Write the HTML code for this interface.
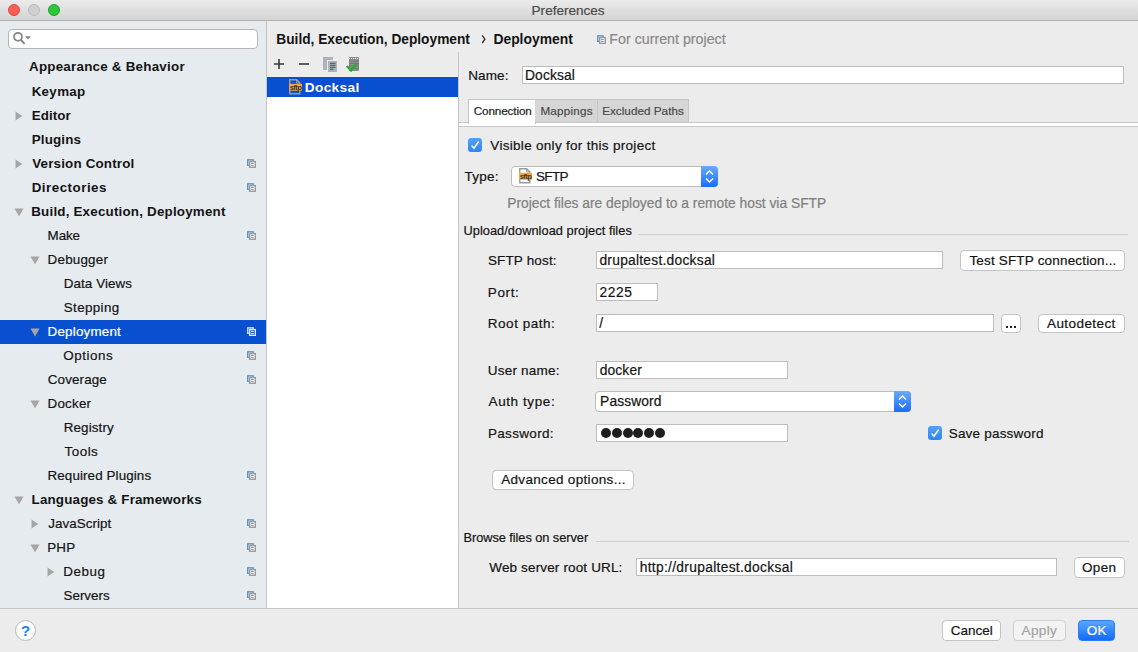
<!DOCTYPE html>
<html><head><meta charset="utf-8"><style>
html,body{margin:0;padding:0}
body{width:1138px;height:652px;overflow:hidden;position:relative;background:#ececec;font-family:"Liberation Sans",sans-serif}
.a{position:absolute;box-sizing:content-box}
.t{position:absolute;white-space:nowrap;line-height:1;-webkit-text-stroke:0.2px currentColor}
.t.b{-webkit-text-stroke:0}
.bl{display:inline-block;width:0;height:0;vertical-align:baseline}
.fld{background:#fff;border:1px solid #bdbdbd}
.btn{box-sizing:border-box;background:#fff;border:1px solid #c3c3c3;border-radius:4px}
</style></head><body>
<div class="a" style="left:0;top:0;width:1138px;height:20px;background:linear-gradient(#ebebeb,#d4d4d4)"></div>
<div class="a" style="left:0;top:20px;width:1138px;height:1px;background:#b3b3b3"></div>
<div class="a" style="left:8px;top:4px;width:10px;height:10px;border-radius:50%;background:#fd5f57;border:1px solid #e0443e"></div>
<div class="a" style="left:28px;top:4px;width:10px;height:10px;border-radius:50%;background:#cfcfcf;border:1px solid #bababa"></div>
<div class="a" style="left:48px;top:4px;width:10px;height:10px;border-radius:50%;background:#2bc73f;border:1px solid #16a526"></div>
<div class="a" style="left:0;top:21px;width:266px;height:587px;background:#e6ebf0"></div>
<div class="a" style="left:266px;top:21px;width:1px;height:587px;background:#c4c4c4"></div>
<div class="a" style="left:8px;top:29px;width:248px;height:18px;background:#fff;border:1px solid #b5b5b5;border-radius:4px"></div>
<svg class="a" style="left:12px;top:31px" width="20" height="16" viewBox="0 0 20 16">
<circle cx="6" cy="5.8" r="4" fill="none" stroke="#858585" stroke-width="1.7"/>
<path d="M8.8 8.8L12.6 12.9" stroke="#858585" stroke-width="2"/>
<path d="M13 5.2H18.8L15.9 8.6Z" fill="#858585"/>
</svg>
<div class="a" style="left:0;top:320px;width:266px;height:24px;background:#0950d0"></div>
<svg class="a" style="left:15px;top:159px" width="8" height="10" viewBox="0 0 8 10"><path d="M0.5 0.5L7.5 5L0.5 9.5Z" fill="#a6a6a6"/></svg>
<svg class="a" style="left:15px;top:111px" width="8" height="10" viewBox="0 0 8 10"><path d="M0.5 0.5L7.5 5L0.5 9.5Z" fill="#a6a6a6"/></svg>
<svg class="a" style="left:31px;top:519px" width="8" height="10" viewBox="0 0 8 10"><path d="M0.5 0.5L7.5 5L0.5 9.5Z" fill="#a6a6a6"/></svg>
<svg class="a" style="left:47px;top:567px" width="8" height="10" viewBox="0 0 8 10"><path d="M0.5 0.5L7.5 5L0.5 9.5Z" fill="#a6a6a6"/></svg>
<svg class="a" style="left:14px;top:208px" width="10" height="9" viewBox="0 0 10 9"><path d="M0.5 0.5L9.5 0.5L5 8.5Z" fill="#a6a6a6"/></svg>
<svg class="a" style="left:30px;top:256px" width="10" height="9" viewBox="0 0 10 9"><path d="M0.5 0.5L9.5 0.5L5 8.5Z" fill="#a6a6a6"/></svg>
<svg class="a" style="left:30px;top:328px" width="10" height="9" viewBox="0 0 10 9"><path d="M0.5 0.5L9.5 0.5L5 8.5Z" fill="#a6a6a6"/></svg>
<svg class="a" style="left:30px;top:400px" width="10" height="9" viewBox="0 0 10 9"><path d="M0.5 0.5L9.5 0.5L5 8.5Z" fill="#a6a6a6"/></svg>
<svg class="a" style="left:14px;top:496px" width="10" height="9" viewBox="0 0 10 9"><path d="M0.5 0.5L9.5 0.5L5 8.5Z" fill="#a6a6a6"/></svg>
<svg class="a" style="left:30px;top:544px" width="10" height="9" viewBox="0 0 10 9"><path d="M0.5 0.5L9.5 0.5L5 8.5Z" fill="#a6a6a6"/></svg>
<svg class="a" style="left:246px;top:158px" width="11" height="11" viewBox="0 0 11 11">
<rect x="1.75" y="1.85" width="5.4" height="5.5" fill="none" stroke="#4d8fc2" stroke-width="1.3"/>
<rect x="3.65" y="3.55" width="5.7" height="5.8" fill="#e6ebf0" stroke="#9b9b9b" stroke-width="1.3"/>
<path d="M5 5.5H7.8M5 7.5H7.8" stroke="#9b9b9b" stroke-width="1"/>
</svg>
<svg class="a" style="left:246px;top:182px" width="11" height="11" viewBox="0 0 11 11">
<rect x="1.75" y="1.85" width="5.4" height="5.5" fill="none" stroke="#4d8fc2" stroke-width="1.3"/>
<rect x="3.65" y="3.55" width="5.7" height="5.8" fill="#e6ebf0" stroke="#9b9b9b" stroke-width="1.3"/>
<path d="M5 5.5H7.8M5 7.5H7.8" stroke="#9b9b9b" stroke-width="1"/>
</svg>
<svg class="a" style="left:246px;top:230px" width="11" height="11" viewBox="0 0 11 11">
<rect x="1.75" y="1.85" width="5.4" height="5.5" fill="none" stroke="#4d8fc2" stroke-width="1.3"/>
<rect x="3.65" y="3.55" width="5.7" height="5.8" fill="#e6ebf0" stroke="#9b9b9b" stroke-width="1.3"/>
<path d="M5 5.5H7.8M5 7.5H7.8" stroke="#9b9b9b" stroke-width="1"/>
</svg>
<svg class="a" style="left:246px;top:350px" width="11" height="11" viewBox="0 0 11 11">
<rect x="1.75" y="1.85" width="5.4" height="5.5" fill="none" stroke="#4d8fc2" stroke-width="1.3"/>
<rect x="3.65" y="3.55" width="5.7" height="5.8" fill="#e6ebf0" stroke="#9b9b9b" stroke-width="1.3"/>
<path d="M5 5.5H7.8M5 7.5H7.8" stroke="#9b9b9b" stroke-width="1"/>
</svg>
<svg class="a" style="left:246px;top:374px" width="11" height="11" viewBox="0 0 11 11">
<rect x="1.75" y="1.85" width="5.4" height="5.5" fill="none" stroke="#4d8fc2" stroke-width="1.3"/>
<rect x="3.65" y="3.55" width="5.7" height="5.8" fill="#e6ebf0" stroke="#9b9b9b" stroke-width="1.3"/>
<path d="M5 5.5H7.8M5 7.5H7.8" stroke="#9b9b9b" stroke-width="1"/>
</svg>
<svg class="a" style="left:246px;top:470px" width="11" height="11" viewBox="0 0 11 11">
<rect x="1.75" y="1.85" width="5.4" height="5.5" fill="none" stroke="#4d8fc2" stroke-width="1.3"/>
<rect x="3.65" y="3.55" width="5.7" height="5.8" fill="#e6ebf0" stroke="#9b9b9b" stroke-width="1.3"/>
<path d="M5 5.5H7.8M5 7.5H7.8" stroke="#9b9b9b" stroke-width="1"/>
</svg>
<svg class="a" style="left:246px;top:518px" width="11" height="11" viewBox="0 0 11 11">
<rect x="1.75" y="1.85" width="5.4" height="5.5" fill="none" stroke="#4d8fc2" stroke-width="1.3"/>
<rect x="3.65" y="3.55" width="5.7" height="5.8" fill="#e6ebf0" stroke="#9b9b9b" stroke-width="1.3"/>
<path d="M5 5.5H7.8M5 7.5H7.8" stroke="#9b9b9b" stroke-width="1"/>
</svg>
<svg class="a" style="left:246px;top:542px" width="11" height="11" viewBox="0 0 11 11">
<rect x="1.75" y="1.85" width="5.4" height="5.5" fill="none" stroke="#4d8fc2" stroke-width="1.3"/>
<rect x="3.65" y="3.55" width="5.7" height="5.8" fill="#e6ebf0" stroke="#9b9b9b" stroke-width="1.3"/>
<path d="M5 5.5H7.8M5 7.5H7.8" stroke="#9b9b9b" stroke-width="1"/>
</svg>
<svg class="a" style="left:246px;top:566px" width="11" height="11" viewBox="0 0 11 11">
<rect x="1.75" y="1.85" width="5.4" height="5.5" fill="none" stroke="#4d8fc2" stroke-width="1.3"/>
<rect x="3.65" y="3.55" width="5.7" height="5.8" fill="#e6ebf0" stroke="#9b9b9b" stroke-width="1.3"/>
<path d="M5 5.5H7.8M5 7.5H7.8" stroke="#9b9b9b" stroke-width="1"/>
</svg>
<svg class="a" style="left:246px;top:590px" width="11" height="11" viewBox="0 0 11 11">
<rect x="1.75" y="1.85" width="5.4" height="5.5" fill="none" stroke="#4d8fc2" stroke-width="1.3"/>
<rect x="3.65" y="3.55" width="5.7" height="5.8" fill="#e6ebf0" stroke="#9b9b9b" stroke-width="1.3"/>
<path d="M5 5.5H7.8M5 7.5H7.8" stroke="#9b9b9b" stroke-width="1"/>
</svg>
<svg class="a" style="left:246px;top:326px" width="11" height="11" viewBox="0 0 11 11">
<rect x="1.75" y="1.85" width="5.4" height="5.5" fill="none" stroke="#d6eeff" stroke-width="1.3"/>
<rect x="3.65" y="3.55" width="5.7" height="5.8" fill="#0950d0" stroke="#f2e8d6" stroke-width="1.3"/>
<path d="M5 5.5H7.8M5 7.5H7.8" stroke="#f2e8d6" stroke-width="1"/>
</svg>
<div class="a" style="left:267px;top:77px;width:191px;height:531px;background:#fff"></div>
<div class="a" style="left:267px;top:77px;width:191px;height:20px;background:#0950d0"></div>
<div class="a" style="left:458px;top:52px;width:1px;height:556px;background:#c5c5c5"></div>
<svg class="a" style="left:289px;top:79px" width="14" height="16" viewBox="0 0 14 16">
<path d="M0.75 0.75H7.6L10.75 3.9V14.85H0.75Z" fill="none" stroke="#9a9a9a" stroke-width="1.5"/>
<path d="M7.5 1V4H10.5" fill="none" stroke="#9a9a9a" stroke-width="1"/>
<rect x="0" y="4.8" width="13" height="6.9" fill="#f4a640"/>
<text x="6.5" y="10.6" font-family="Liberation Sans" font-size="7.6" font-weight="bold" text-anchor="middle" fill="#3a3a3a" letter-spacing="-0.6" transform="scale(1,1)">sftp</text>
</svg>
<svg class="a" style="left:272px;top:56px" width="92" height="18" viewBox="0 0 92 18">
<path d="M2 8H12M7 3V13" stroke="#383838" stroke-width="1.6"/>
<path d="M27 8H37" stroke="#383838" stroke-width="1.6"/>
<rect x="51" y="1" width="10" height="13" fill="#abb4bb"/>
<rect x="55.5" y="4.5" width="10" height="12" fill="#abb4bb" stroke="#ececec" stroke-width="1"/>
<path d="M58 7.3H63.5M58 9.3H63.5M58 11.3H63.5M58 13.3H61.5" stroke="#4a5157" stroke-width="1"/>
<rect x="77" y="1" width="10" height="14" fill="#8e8e8e"/>
<path d="M77 2.5H87" stroke="#f0f0f0" stroke-width="1" stroke-dasharray="1 1"/>
<path d="M77 5H87M77 7.5H87M77 10H87M77 12.5H87" stroke="#6e6e6e" stroke-width="0.8"/>
<path d="M74.8 10L79.2 14.6L85 7.2" fill="none" stroke="#20b12c" stroke-width="2.3"/>
</svg>
<svg class="a" style="left:478px;top:32px" width="10" height="14" viewBox="478 32 10 14"><path d="M482.2 35.4L484.9 39.2L482.2 43" fill="none" stroke="#2a2a2a" stroke-width="1.3"/></svg>
<svg class="a" style="left:596px;top:34px" width="11" height="11" viewBox="0 0 11 11">
<rect x="1.75" y="1.85" width="5.4" height="5.5" fill="none" stroke="#4d8fc2" stroke-width="1.3"/>
<rect x="3.65" y="3.55" width="5.7" height="5.8" fill="#ececec" stroke="#9b9b9b" stroke-width="1.3"/>
<path d="M5 5.5H7.8M5 7.5H7.8" stroke="#9b9b9b" stroke-width="1"/>
</svg>
<div class="a fld" style="left:522px;top:66px;width:600px;height:16px"></div>
<div class="a" style="left:459px;top:122px;width:679px;height:1px;background:#c8c8c8"></div>
<div class="a" style="left:459px;top:123px;width:679px;height:3px;background:#fff"></div>
<div class="a" style="left:459px;top:126px;width:679px;height:1px;background:#c8c8c8"></div>
<div class="a" style="left:468px;top:99px;width:66px;height:23px;background:#fff;border:1px solid #c6c6c6;border-bottom:none;height:24px"></div>
<div class="a" style="left:535px;top:99px;width:62px;height:22px;background:#d6d6d6;border-top:1px solid #c6c6c6"></div>
<div class="a" style="left:597px;top:99px;width:1px;height:23px;background:#c6c6c6"></div>
<div class="a" style="left:598px;top:99px;width:90px;height:22px;background:#d6d6d6;border-top:1px solid #c6c6c6;border-right:1px solid #c6c6c6"></div>
<div class="a" style="left:468px;top:138px;width:14px;height:14px;border-radius:3px;background:linear-gradient(#55a2f9,#2a85f6)"></div>
<svg class="a" style="left:468px;top:138px" width="14" height="14" viewBox="0 0 14 14"><path d="M3.6 7.4L6 10.2L10.6 3.6" fill="none" stroke="#fff" stroke-width="1.5"/></svg>
<div class="a" style="left:928px;top:426px;width:14px;height:14px;border-radius:3px;background:linear-gradient(#55a2f9,#2a85f6)"></div>
<svg class="a" style="left:928px;top:426px" width="14" height="14" viewBox="0 0 14 14"><path d="M3.6 7.4L6 10.2L10.6 3.6" fill="none" stroke="#fff" stroke-width="1.5"/></svg>
<div class="a" style="left:511px;top:166px;width:207px;height:19px;background:#fff;border:1px solid #bcbcbc;border-radius:4px;box-sizing:border-box;height:21px"></div>
<div class="a" style="left:701px;top:166px;width:17px;height:21px;border-radius:0 4px 4px 0;background:linear-gradient(#67acfb,#1a6dfd)"></div>
<svg class="a" style="left:701px;top:166px" width="17" height="21" viewBox="0 0 17 21"><path d="M5 8.5L8.5 5L12 8.5M5 12.5L8.5 16L12 12.5" fill="none" stroke="#fff" stroke-width="1.4"/></svg>
<svg class="a" style="left:519px;top:168px" width="14" height="16" viewBox="0 0 14 16">
<path d="M0.75 0.75H7.6L10.75 3.9V14.85H0.75Z" fill="none" stroke="#9a9a9a" stroke-width="1.5"/>
<path d="M7.5 1V4H10.5" fill="none" stroke="#9a9a9a" stroke-width="1"/>
<rect x="0" y="4.8" width="13" height="6.9" fill="#f4a640"/>
<text x="6.5" y="10.6" font-family="Liberation Sans" font-size="7.6" font-weight="bold" text-anchor="middle" fill="#3a3a3a" letter-spacing="-0.6" transform="scale(1,1)">sftp</text>
</svg>
<div class="a" style="left:638px;top:234px;width:490px;height:1px;background:#d0d0d0"></div>
<div class="a fld" style="left:596px;top:251px;width:345px;height:16px"></div>
<div class="a fld" style="left:596px;top:283px;width:60px;height:16px"></div>
<div class="a fld" style="left:596px;top:314px;width:396px;height:16px"></div>
<div class="a fld" style="left:596px;top:361px;width:190px;height:16px"></div>
<div class="a" style="left:595px;top:391px;width:316px;height:19px;background:#fff;border:1px solid #bcbcbc;border-radius:4px;box-sizing:border-box;height:21px"></div>
<div class="a" style="left:894px;top:391px;width:17px;height:21px;border-radius:0 4px 4px 0;background:linear-gradient(#67acfb,#1a6dfd)"></div>
<svg class="a" style="left:894px;top:391px" width="17" height="21" viewBox="0 0 17 21"><path d="M5 8.5L8.5 5L12 8.5M5 12.5L8.5 16L12 12.5" fill="none" stroke="#fff" stroke-width="1.4"/></svg>
<div class="a fld" style="left:596px;top:424px;width:190px;height:16px"></div>
<div class="a" style="left:601.0px;top:428px;width:10px;height:10px;border-radius:50%;background:#1e1e1e"></div>
<div class="a" style="left:611.8px;top:428px;width:10px;height:10px;border-radius:50%;background:#1e1e1e"></div>
<div class="a" style="left:622.6px;top:428px;width:10px;height:10px;border-radius:50%;background:#1e1e1e"></div>
<div class="a" style="left:633.4px;top:428px;width:10px;height:10px;border-radius:50%;background:#1e1e1e"></div>
<div class="a" style="left:644.2px;top:428px;width:10px;height:10px;border-radius:50%;background:#1e1e1e"></div>
<div class="a" style="left:655.0px;top:428px;width:10px;height:10px;border-radius:50%;background:#1e1e1e"></div>
<div class="a btn" style="left:960px;top:250px;width:165px;height:21px;"></div>
<div class="a btn" style="left:1001px;top:314px;width:20px;height:19px;"></div>
<div class="a btn" style="left:1038px;top:314px;width:87px;height:19px;"></div>
<div class="a btn" style="left:492px;top:470px;width:142px;height:20px;"></div>
<div class="a btn" style="left:1074px;top:557px;width:51px;height:21px;"></div>
<div class="a btn" style="left:942px;top:620px;width:59px;height:21px;"></div>
<div class="a btn" style="left:1013px;top:620px;width:53px;height:21px;background:#f3f3f3;border-color:#cfcfcf"></div>
<div class="a btn" style="left:1078px;top:620px;width:37px;height:21px;background:linear-gradient(#5aa6fb,#116bfd);border-color:#2a7ef5"></div>
<div class="a" style="left:1006px;top:326px;width:2px;height:2px;background:#222"></div><div class="a" style="left:1010px;top:326px;width:2px;height:2px;background:#222"></div><div class="a" style="left:1014px;top:326px;width:2px;height:2px;background:#222"></div>
<div class="a" style="left:596px;top:541px;width:533px;height:1px;background:#d0d0d0"></div>
<div class="a fld" style="left:636px;top:558px;width:419px;height:16px"></div>
<div class="a" style="left:0;top:608px;width:1138px;height:1px;background:#c4c4c4"></div>
<div class="a" style="left:15px;top:620px;width:19px;height:19px;border-radius:50%;background:#fff;border:1px solid #b8b8b8"></div>
<div class="a" style="left:15px;top:619.5px;width:21px;height:21px;text-align:center;font-size:15px;font-weight:bold;line-height:21px;color:#1a7ef8">?</div>
<div class="t" id="t0" style="left:531.59px;top:3.65px;font-size:13.55px;font-weight:normal;color:#4a4a4a;">Preferences<i class="bl"></i></div>
<div class="t b" id="t1" style="left:28.99px;top:60.01px;font-size:13.40px;font-weight:bold;color:#141414;letter-spacing:0.228px;">Appearance &amp; Behavior<i class="bl"></i></div>
<div class="t b" id="t2" style="left:31.64px;top:85.01px;font-size:13.40px;font-weight:bold;color:#141414;letter-spacing:0.314px;">Keymap<i class="bl"></i></div>
<div class="t b" id="t3" style="left:31.73px;top:109.01px;font-size:13.40px;font-weight:bold;color:#141414;letter-spacing:0.041px;">Editor<i class="bl"></i></div>
<div class="t b" id="t4" style="left:31.69px;top:133.00px;font-size:13.40px;font-weight:bold;color:#141414;letter-spacing:0.155px;">Plugins<i class="bl"></i></div>
<div class="t b" id="t5" style="left:32.25px;top:157.00px;font-size:13.40px;font-weight:bold;color:#141414;letter-spacing:0.163px;">Version Control<i class="bl"></i></div>
<div class="t b" id="t6" style="left:31.70px;top:181.00px;font-size:13.40px;font-weight:bold;color:#141414;letter-spacing:0.485px;">Directories<i class="bl"></i></div>
<div class="t b" id="t7" style="left:31.25px;top:205.00px;font-size:13.40px;font-weight:bold;color:#141414;letter-spacing:0.191px;">Build, Execution, Deployment<i class="bl"></i></div>
<div class="t" id="t8" style="left:47.59px;top:229.01px;font-size:13.40px;font-weight:normal;color:#141414;letter-spacing:-0.084px;">Make<i class="bl"></i></div>
<div class="t" id="t9" style="left:47.60px;top:253.01px;font-size:13.40px;font-weight:normal;color:#141414;letter-spacing:0.210px;">Debugger<i class="bl"></i></div>
<div class="t" id="t10" style="left:63.70px;top:277.01px;font-size:13.40px;font-weight:normal;color:#141414;letter-spacing:0.089px;">Data Views<i class="bl"></i></div>
<div class="t" id="t11" style="left:63.76px;top:301.01px;font-size:13.40px;font-weight:normal;color:#141414;letter-spacing:0.363px;">Stepping<i class="bl"></i></div>
<div class="t" id="t12" style="left:47.53px;top:325.01px;font-size:13.40px;font-weight:normal;color:#ffffff;letter-spacing:0.206px;">Deployment<i class="bl"></i></div>
<div class="t" id="t13" style="left:63.35px;top:349.01px;font-size:13.40px;font-weight:normal;color:#141414;letter-spacing:0.538px;">Options<i class="bl"></i></div>
<div class="t" id="t14" style="left:47.77px;top:373.01px;font-size:13.40px;font-weight:normal;color:#141414;letter-spacing:0.129px;">Coverage<i class="bl"></i></div>
<div class="t" id="t15" style="left:47.55px;top:397.01px;font-size:13.40px;font-weight:normal;color:#141414;letter-spacing:0.206px;">Docker<i class="bl"></i></div>
<div class="t" id="t16" style="left:63.73px;top:421.01px;font-size:13.40px;font-weight:normal;color:#141414;letter-spacing:0.125px;">Registry<i class="bl"></i></div>
<div class="t" id="t17" style="left:64.55px;top:445.01px;font-size:13.40px;font-weight:normal;color:#141414;letter-spacing:0.497px;">Tools<i class="bl"></i></div>
<div class="t" id="t18" style="left:47.56px;top:469.01px;font-size:13.40px;font-weight:normal;color:#141414;letter-spacing:0.105px;">Required Plugins<i class="bl"></i></div>
<div class="t b" id="t19" style="left:31.59px;top:493.00px;font-size:13.40px;font-weight:bold;color:#141414;letter-spacing:0.160px;">Languages &amp; Frameworks<i class="bl"></i></div>
<div class="t" id="t20" style="left:48.19px;top:517.01px;font-size:13.40px;font-weight:normal;color:#141414;letter-spacing:0.071px;">JavaScript<i class="bl"></i></div>
<div class="t" id="t21" style="left:47.17px;top:541.01px;font-size:13.40px;font-weight:normal;color:#141414;letter-spacing:0.228px;">PHP<i class="bl"></i></div>
<div class="t" id="t22" style="left:63.23px;top:565.01px;font-size:13.40px;font-weight:normal;color:#141414;letter-spacing:0.538px;">Debug<i class="bl"></i></div>
<div class="t" id="t23" style="left:63.55px;top:589.01px;font-size:13.40px;font-weight:normal;color:#141414;letter-spacing:-0.010px;">Servers<i class="bl"></i></div>
<div class="t b" id="t24" style="left:276.31px;top:32.99px;font-size:13.72px;font-weight:bold;color:#141414;">Build, Execution, Deployment<i class="bl"></i></div>
<div class="t b" id="t26" style="left:493.38px;top:32.99px;font-size:13.90px;font-weight:bold;color:#141414;">Deployment<i class="bl"></i></div>
<div class="t" id="t27" style="left:609.37px;top:32.01px;font-size:14.24px;font-weight:normal;color:#8a8a8a;">For current project<i class="bl"></i></div>
<div class="t b" id="t28" style="left:304.73px;top:81.01px;font-size:13.70px;font-weight:bold;color:#ffffff;letter-spacing:0.343px;">Docksal<i class="bl"></i></div>
<div class="t" id="t29" style="left:468.22px;top:69.00px;font-size:13.50px;font-weight:normal;color:#141414;letter-spacing:0.123px;">Name:<i class="bl"></i></div>
<div class="t" id="t30" style="left:525.02px;top:68.61px;font-size:13.80px;font-weight:normal;color:#141414;letter-spacing:0.114px;">Docksal<i class="bl"></i></div>
<div class="t" id="t31" style="left:473.70px;top:105.01px;font-size:11.70px;font-weight:normal;color:#1a1a1a;letter-spacing:-0.109px;">Connection<i class="bl"></i></div>
<div class="t" id="t32" style="left:540.38px;top:105.01px;font-size:11.70px;font-weight:normal;color:#4a4a4a;letter-spacing:0.206px;">Mappings<i class="bl"></i></div>
<div class="t" id="t33" style="left:602.15px;top:105.01px;font-size:11.70px;font-weight:normal;color:#4a4a4a;letter-spacing:0.033px;">Excluded Paths<i class="bl"></i></div>
<div class="t" id="t34" style="left:490.37px;top:139.00px;font-size:13.50px;font-weight:normal;color:#141414;letter-spacing:0.297px;">Visible only for this project<i class="bl"></i></div>
<div class="t" id="t35" style="left:464.48px;top:169.60px;font-size:13.50px;font-weight:normal;color:#141414;letter-spacing:0.224px;">Type:<i class="bl"></i></div>
<div class="t" id="t36" style="left:535.88px;top:170.00px;font-size:13.50px;font-weight:normal;color:#141414;letter-spacing:-0.600px;">SFTP<i class="bl"></i></div>
<div class="t" id="t37" style="left:507.19px;top:196.90px;font-size:13.81px;font-weight:normal;color:#808080;">Project files are deployed to a remote host via SFTP<i class="bl"></i></div>
<div class="t" id="t38" style="left:463.45px;top:225.00px;font-size:12.80px;font-weight:normal;color:#141414;letter-spacing:0.043px;">Upload/download project files<i class="bl"></i></div>
<div class="t" id="t39" style="left:487.88px;top:254.21px;font-size:13.50px;font-weight:normal;color:#141414;letter-spacing:0.161px;">SFTP host:<i class="bl"></i></div>
<div class="t" id="t40" style="left:599.46px;top:254.01px;font-size:13.80px;font-weight:normal;color:#141414;letter-spacing:0.248px;">drupaltest.docksal<i class="bl"></i></div>
<div class="t" id="t41" style="left:969.39px;top:254.41px;font-size:13.50px;font-weight:normal;color:#141414;letter-spacing:0.177px;">Test SFTP connection...<i class="bl"></i></div>
<div class="t" id="t42" style="left:487.84px;top:285.81px;font-size:13.50px;font-weight:normal;color:#141414;letter-spacing:0.600px;">Port:<i class="bl"></i></div>
<div class="t" id="t43" style="left:599.47px;top:286.01px;font-size:13.80px;font-weight:normal;color:#141414;letter-spacing:0.600px;">2225<i class="bl"></i></div>
<div class="t" id="t44" style="left:487.86px;top:316.60px;font-size:13.50px;font-weight:normal;color:#141414;letter-spacing:0.503px;">Root path:<i class="bl"></i></div>
<div class="t" id="t45" style="left:599.37px;top:317.01px;font-size:13.80px;font-weight:normal;color:#141414;">/<i class="bl"></i></div>
<div class="t" id="t46" style="left:1047.02px;top:317.00px;font-size:13.50px;font-weight:normal;color:#141414;letter-spacing:0.422px;">Autodetect<i class="bl"></i></div>
<div class="t" id="t47" style="left:487.80px;top:364.00px;font-size:13.50px;font-weight:normal;color:#141414;letter-spacing:0.202px;">User name:<i class="bl"></i></div>
<div class="t" id="t48" style="left:599.70px;top:363.61px;font-size:13.80px;font-weight:normal;color:#141414;letter-spacing:0.143px;">docker<i class="bl"></i></div>
<div class="t" id="t49" style="left:488.60px;top:395.00px;font-size:13.50px;font-weight:normal;color:#141414;letter-spacing:0.584px;">Auth type:<i class="bl"></i></div>
<div class="t" id="t50" style="left:600.11px;top:395.01px;font-size:13.80px;font-weight:normal;color:#141414;letter-spacing:0.090px;">Password<i class="bl"></i></div>
<div class="t" id="t51" style="left:487.90px;top:426.60px;font-size:13.50px;font-weight:normal;color:#141414;letter-spacing:0.331px;">Password:<i class="bl"></i></div>
<div class="t" id="t52" style="left:948.69px;top:426.60px;font-size:13.50px;font-weight:normal;color:#141414;letter-spacing:0.206px;">Save password<i class="bl"></i></div>
<div class="t" id="t53" style="left:501.18px;top:473.00px;font-size:13.50px;font-weight:normal;color:#141414;letter-spacing:0.321px;">Advanced options...<i class="bl"></i></div>
<div class="t" id="t54" style="left:463.46px;top:531.61px;font-size:12.80px;font-weight:normal;color:#141414;letter-spacing:-0.057px;">Browse files on server<i class="bl"></i></div>
<div class="t" id="t55" style="left:489.24px;top:560.50px;font-size:13.50px;font-weight:normal;color:#141414;letter-spacing:0.149px;">Web server root URL:<i class="bl"></i></div>
<div class="t" id="t56" style="left:639.69px;top:560.71px;font-size:13.80px;font-weight:normal;color:#141414;letter-spacing:0.305px;">http://drupaltest.docksal<i class="bl"></i></div>
<div class="t" id="t57" style="left:1081.90px;top:561.00px;font-size:13.50px;font-weight:normal;color:#141414;letter-spacing:0.392px;">Open<i class="bl"></i></div>
<div class="t" id="t58" style="left:950.87px;top:624.21px;font-size:13.50px;font-weight:normal;color:#141414;letter-spacing:-0.021px;">Cancel<i class="bl"></i></div>
<div class="t" id="t59" style="left:1021.53px;top:624.21px;font-size:13.50px;font-weight:normal;color:#a3a3a3;letter-spacing:0.380px;">Apply<i class="bl"></i></div>
<div class="t" id="t60" style="left:1086.83px;top:624.31px;font-size:13.50px;font-weight:normal;color:#ffffff;letter-spacing:0.252px;">OK<i class="bl"></i></div>
</body></html>
